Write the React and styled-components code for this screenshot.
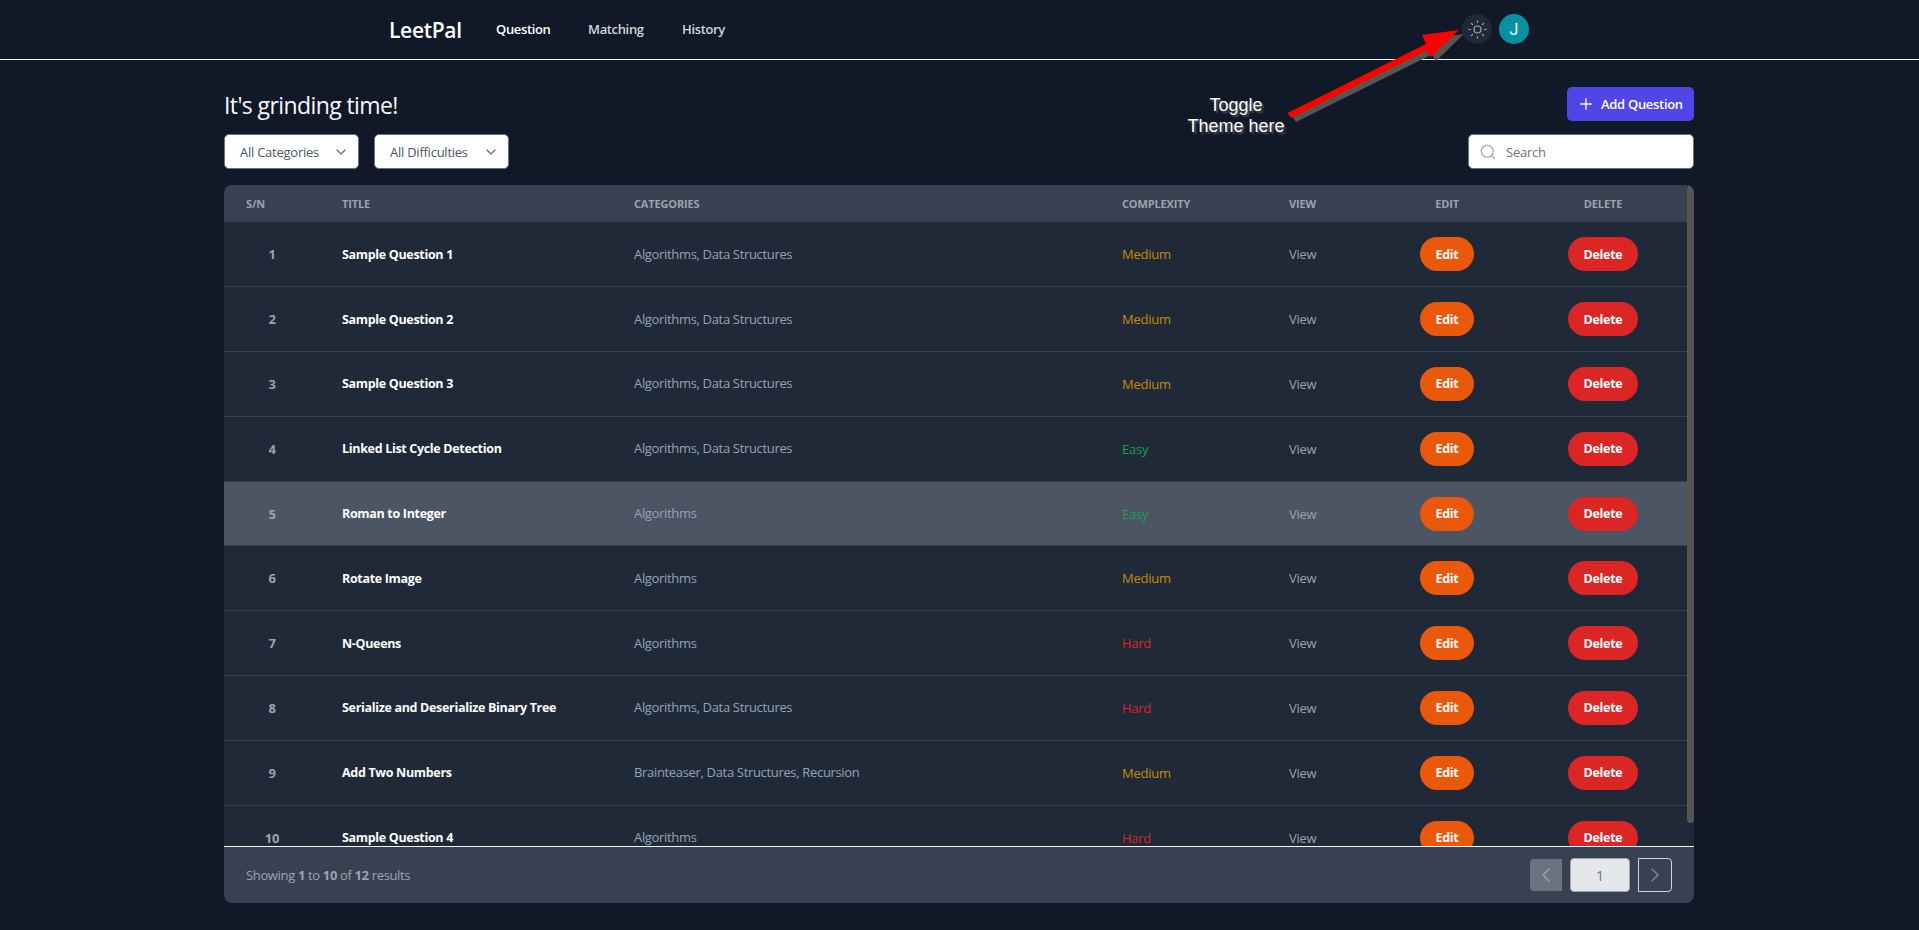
import React from "react";
import styled, { createGlobalStyle } from "styled-components";
import { Sun, Plus, Search, ChevronDown, ChevronLeft, ChevronRight } from "lucide-react";

const Global = createGlobalStyle`
  html, body { margin: 0; padding: 0; height: 100%; background: #111827; overflow: hidden; }
  * { box-sizing: border-box; }
  body { font-family: "Open Sans", "Noto Sans", sans-serif; color: #f9fafb; }
`;

const Page = styled.div`
  position: relative;
  height: 930px;
  background: #111827;
`;

const Nav = styled.nav`
  height: 60px;
  display: flex;
  align-items: center;
  padding: 0 390px;
  border-bottom: 1px solid #f3f4f6;
`;

const Logo = styled.div`
  font-size: 21px;
  font-weight: 600;
  letter-spacing: -0.3px;
  color: #fff;
  margin-left: -1px;
  margin-right: 34px;
  width: 73px;
  white-space: nowrap;
`;

const NavLink = styled.a`
  font-size: 13px;
  font-weight: 600;
  letter-spacing: -0.35px;
  margin-top: -2px;
  color: ${(p) => (p.$active ? "#ffffff" : "#d1d5db")};
  width: ${(p) => p.$w}px;
  white-space: nowrap;
`;

const NavRight = styled.div`
  margin-left: auto;
  display: flex;
  align-items: center;
  gap: 7px;
  margin-top: -1px;
`;

const ThemeButton = styled.button`
  width: 30px;
  height: 30px;
  border-radius: 50%;
  border: 0;
  padding: 0;
  background: #1f2937;
  color: #9ca3af;
  display: flex;
  align-items: center;
  justify-content: center;
`;

const Avatar = styled.div`
  width: 30px;
  height: 30px;
  border-radius: 50%;
  background: #0891a2;
  color: #ecfeff;
  display: flex;
  align-items: center;
  justify-content: center;
  font: 16px "Roboto", sans-serif;
`;

const Main = styled.main`
  width: 1470px;
  margin-left: 224px;
  padding-top: 27px;
`;

const TitleRow = styled.div`
  display: flex;
  align-items: center;
  justify-content: space-between;
  height: 34px;
`;

const Title = styled.h1`
  margin: 0;
  padding-top: 2px;
  font-size: 23px;
  font-weight: 500;
  letter-spacing: -0.6px;
  color: #f9fafb;
`;

const AddButton = styled.button`
  width: 127px;
  height: 34px;
  border: 0;
  border-radius: 5px;
  background: #4f46e5;
  color: #fff;
  display: flex;
  align-items: center;
  gap: 6px;
  padding: 0 0 0 10px;
  font: 600 13px "Open Sans", sans-serif;
  letter-spacing: -0.3px;
  white-space: nowrap;
`;

const FilterRow = styled.div`
  display: flex;
  align-items: center;
  margin-top: 13px;
  height: 35px;
  gap: 15px;
`;

const Select = styled.div`
  width: 135px;
  height: 35px;
  border-radius: 5px;
  background: #fff;
  border: 1px solid #6b7280;
  color: #4b5563;
  display: flex;
  align-items: center;
  justify-content: space-between;
  padding: 1px 9px 0 15px;
  font-size: 13px;
  letter-spacing: -0.25px;
  white-space: nowrap;
  svg { margin-top: -1px; }
`;

const SearchBox = styled.div`
  margin-left: auto;
  width: 226px;
  height: 35px;
  border-radius: 5px;
  background: #fff;
  border: 1px solid #6b7280;
  color: #6b7280;
  display: flex;
  align-items: center;
  gap: 9px;
  padding: 1px 0 0 10px;
  font-size: 13px;
  letter-spacing: -0.25px;
  svg { color: #9ca3af; margin-top: -1px; }
`;

const TableCard = styled.section`
  position: relative;
  margin-top: 16px;
  width: 100%;
  border-radius: 8px;
  overflow: hidden;
  background: #1f2937;
`;

const Scroll = styled.div`
  height: 661px;
  overflow-y: auto;
  scrollbar-width: none;
`;

const ScrollThumb = styled.div`
  position: absolute;
  top: 0;
  right: 0;
  width: 7px;
  height: 638px;
  background: #555;
  border-radius: 4px;
`;

const Table = styled.table`
  width: 1463px;
  table-layout: fixed;
  border-collapse: collapse;
`;

const Th = styled.th`
  height: 37px;
  background: #374151;
  color: #9ca3af;
  font-size: 11px;
  font-weight: 700;
  letter-spacing: -0.15px;
  text-transform: uppercase;
  text-align: ${(p) => p.$align || "left"};
  padding: 0 ${(p) => (p.$align === "center" ? 0 : 22)}px;
`;

const Row = styled.tr`
  height: 64.8px;
  background: ${(p) => (p.$hover ? "#4b5563" : "#1f2937")};
  border-bottom: 1px solid #374151;
`;

const Td = styled.td`
  padding: 0 ${(p) => (p.$align === "center" ? 0 : 22)}px;
  font-size: 13px;
  letter-spacing: -0.25px;
  color: ${(p) => p.$color || "#9ca3af"};
  text-align: ${(p) => p.$align || "left"};
  white-space: nowrap;
`;

const Serial = styled(Td)`
  font-weight: 700;
  text-align: center;
`;

const Name = styled(Td)`
  font-size: 12.5px;
  font-weight: 700;
  color: #fff;
  letter-spacing: -0.32px;
`;

const Cats = styled(Td)`
  color: #94a3b8;
  letter-spacing: -0.33px;
  padding-bottom: 1px;
`;

const Pill = styled.button`
  width: ${(p) => p.$w}px;
  height: 34px;
  border: 0;
  border-radius: 17px;
  background: ${(p) => p.$bg};
  color: #fff;
  padding: 0;
  font: 700 12.5px "Open Sans", sans-serif;
  letter-spacing: -0.3px;
  vertical-align: middle;
`;

const Footer = styled.footer`
  height: 57px;
  background: #374151;
  border-top: 1px solid #f3f4f6;
  display: flex;
  align-items: center;
  justify-content: space-between;
  padding: 0 22px;
`;

const Showing = styled.div`
  font-size: 13px;
  letter-spacing: -0.35px;
  color: #9ca3af;
  b { font-weight: 700; }
`;

const Pager = styled.div`
  display: flex;
  align-items: center;
  gap: 8px;
`;

const PrevBtn = styled.div`
  width: 32px;
  height: 32px;
  background: #6b7280;
  border-radius: 4px 0 0 4px;
  color: #9ca3af;
  display: flex;
  align-items: center;
  justify-content: center;
`;

const PageBtn = styled.div`
  width: 60px;
  height: 34px;
  background: #e5e7eb;
  border: 1px solid #9ca3af;
  border-radius: 4px;
  color: #6b7280;
  font-size: 14px;
  display: flex;
  align-items: center;
  justify-content: center;
`;

const NextBtn = styled.div`
  width: 34px;
  height: 34px;
  border: 1px solid #d1d5db;
  border-radius: 0 4px 4px 0;
  color: #7b8494;
  display: flex;
  align-items: center;
  justify-content: center;
`;

const Note = styled.div`
  position: absolute;
  left: 1166px;
  top: 95px;
  width: 140px;
  text-align: center;
  font: 18px/21px "Liberation Sans", sans-serif;
  color: #fff;
  text-shadow: 2px 2px 2px #555;
`;

const ArrowSvg = styled.svg`
  position: absolute;
  left: 1280px;
  top: 20px;
  pointer-events: none;
`;

const rows = [
  ["Sample Question 1", "Algorithms, Data Structures", "Medium"],
  ["Sample Question 2", "Algorithms, Data Structures", "Medium"],
  ["Sample Question 3", "Algorithms, Data Structures", "Medium"],
  ["Linked List Cycle Detection", "Algorithms, Data Structures", "Easy"],
  ["Roman to Integer", "Algorithms", "Easy"],
  ["Rotate Image", "Algorithms", "Medium"],
  ["N-Queens", "Algorithms", "Hard"],
  ["Serialize and Deserialize Binary Tree", "Algorithms, Data Structures", "Hard"],
  ["Add Two Numbers", "Brainteaser, Data Structures, Recursion", "Medium"],
  ["Sample Question 4", "Algorithms", "Hard"],
];

const levelColor = { Easy: "#16a34a", Medium: "#ca8a04", Hard: "#dc2626" };
const widths = [96, 292, 488, 167, 108, 144, 168];
const arrow = "7.5,93 146,24 142,15 179,10 151,37 147,30.5 11,98";

export default function App() {
  return (
    <Page>
      <Global />
      <Nav>
        <Logo>LeetPal</Logo>
        <NavLink $active $w={92}>Question</NavLink>
        <NavLink $w={94}>Matching</NavLink>
        <NavLink $w={60}>History</NavLink>
        <NavRight>
          <ThemeButton><Sun size={21} strokeWidth={1.4} /></ThemeButton>
          <Avatar>J</Avatar>
        </NavRight>
      </Nav>
      <Main>
        <TitleRow>
          <Title>It's grinding time!</Title>
          <AddButton><Plus size={18} strokeWidth={1.75} />Add Question</AddButton>
        </TitleRow>
        <FilterRow>
          <Select>All Categories<ChevronDown size={16} color="#6b7280" /></Select>
          <Select>All Difficulties<ChevronDown size={16} color="#6b7280" /></Select>
          <SearchBox><Search size={18} strokeWidth={1.5} />Search</SearchBox>
        </FilterRow>
        <TableCard>
          <Scroll>
            <Table>
              <colgroup>
                {widths.map((w, i) => <col key={i} style={{ width: w }} />)}
              </colgroup>
              <thead>
                <tr>
                  <Th>S/N</Th>
                  <Th>Title</Th>
                  <Th>Categories</Th>
                  <Th>Complexity</Th>
                  <Th>View</Th>
                  <Th $align="center">Edit</Th>
                  <Th $align="center">Delete</Th>
                </tr>
              </thead>
              <tbody>
                {rows.map(([name, cats, level], i) => (
                  <Row key={name} $hover={i === 4}>
                    <Serial>{i + 1}</Serial>
                    <Name>{name}</Name>
                    <Cats>{cats}</Cats>
                    <Td $color={levelColor[level]}>{level}</Td>
                    <Td>View</Td>
                    <Td $align="center"><Pill $w={54} $bg="#ea580c">Edit</Pill></Td>
                    <Td $align="center"><Pill $w={70} $bg="#dc2626">Delete</Pill></Td>
                  </Row>
                ))}
              </tbody>
            </Table>
          </Scroll>
          <ScrollThumb />
          <Footer>
            <Showing>Showing <b>1</b> to <b>10</b> of <b>12</b> results</Showing>
            <Pager>
              <PrevBtn><ChevronLeft size={24} strokeWidth={1.5} /></PrevBtn>
              <PageBtn>1</PageBtn>
              <NextBtn><ChevronRight size={24} strokeWidth={1.5} /></NextBtn>
            </Pager>
          </Footer>
        </TableCard>
      </Main>
      <Note>Toggle<br />Theme here</Note>
      <ArrowSvg width="190" height="110" viewBox="0 0 190 110">
        <polygon points={arrow} fill="#555" transform="translate(5,4)" style={{ filter: "blur(0.6px)" }} />
        <polygon points={arrow} fill="#ff0000" />
      </ArrowSvg>
    </Page>
  );
}
